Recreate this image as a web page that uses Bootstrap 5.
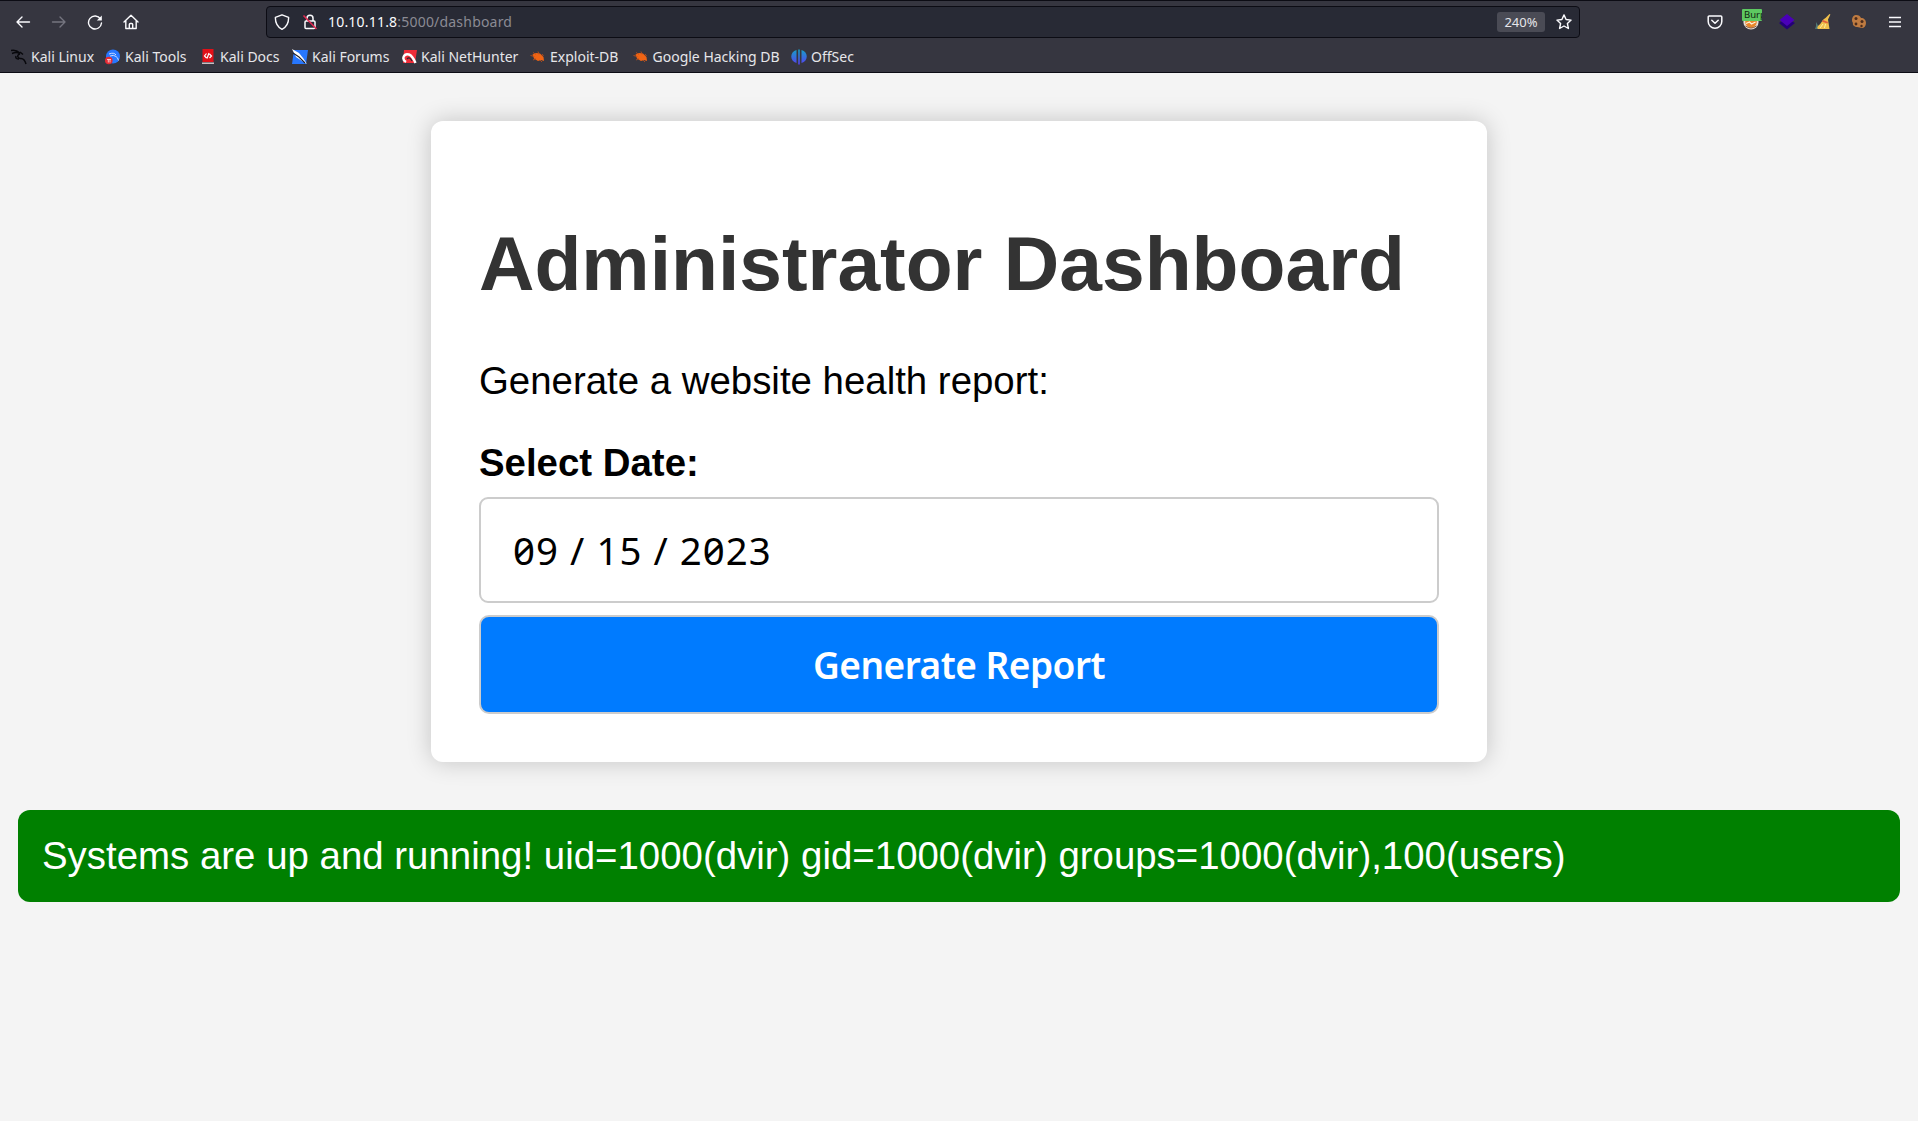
<!DOCTYPE html>
<html lang="en">
<head>
<meta charset="utf-8">
<title>Administrator Dashboard</title>
<link href="https://cdn.jsdelivr.net/npm/bootstrap@5.3.0/dist/css/bootstrap.min.css" rel="stylesheet">
<style>
body{background:#f4f4f4;color:#000;font-family:"Liberation Sans",Arial,sans-serif;font-size:38.4px;line-height:44px;min-height:1121px;overflow:hidden}
.chrome{height:73px;background:#363640;border-top:1px solid #0c0c14;border-bottom:1px solid #0c0c14;font-family:"Noto Sans",sans-serif;font-size:14px;line-height:20px;color:#e6e6ea}
.toolbar{height:40px;padding:1px 15px 0}
.toolbar svg,.marks svg{display:block;flex:none}
.nav-icons{width:251px;gap:20px}
.urlbar{width:1314px;height:32px;background:#282a35;border:1px solid #0c0c14;border-radius:4px;padding:0 7px}
.urlbar .addr{margin-left:10px;color:#8b8b94;white-space:nowrap;letter-spacing:.2px}
.urlbar b{font-weight:400;color:#fbfbfe}
.zoomlvl{background:#4a4b55;border-radius:3px;width:48px;height:20px;font-size:13px;line-height:21px;margin-right:11px;text-align:center}
.ext{gap:20px}
.burp{position:relative;width:16px;height:16px}
.burp span{position:absolute;left:-1px;top:-5px;width:20px;height:12px;background:#5dc861;color:#10240f;font-size:9.5px;line-height:12px;padding-left:2px;overflow:hidden;border-radius:1px}
.marks{height:31px;padding-left:11px}
.marks .mk{gap:4px;white-space:nowrap;flex:none}
.mk:nth-child(1){width:94px}
.mk:nth-child(2){width:95px}
.mk:nth-child(3){width:92px}
.mk:nth-child(4){width:109px}
.mk:nth-child(5){width:129px}
.mk:nth-child(6){width:102.500px}
.mk:nth-child(7){width:158.500px}
.panel{width:1056px;margin:48px auto 0;background:#fff;border-radius:12px;padding:48px;height:641px;box-shadow:0 0 24px rgba(0,0,0,.2)}
.panel h1{font-size:76.8px;line-height:88px;font-weight:700;color:#333;margin:50px 0 52px}
.panel p{margin:0 0 38px}
.panel label{font-weight:700;display:block;margin-bottom:12px}
.datebox{height:106px;border:2px solid #ccc;border-radius:9px;padding:0 32px;font-family:"Noto Sans",sans-serif;font-feature-settings:"zero";letter-spacing:1.05px}
.gobtn{margin-top:12px;height:99px;width:100%;background:#007bff;border:2px solid #ccc;border-radius:10px;color:#fff;font:600 37px/44px "Noto Sans",sans-serif;letter-spacing:-.5px;padding-top:2px}
.status{margin:48px 18px 0;height:92px;background:#008000;color:#fff;border-radius:12px;padding:0 24px;letter-spacing:.01px}
</style>
<script src="https://cdn.jsdelivr.net/npm/bootstrap@5.3.0/dist/js/bootstrap.bundle.min.js"></script>
</head>
<body>
<header class="chrome">
  <div class="toolbar d-flex align-items-center">
    <div class="nav-icons d-flex align-items-center">
      <svg width="16" height="16" fill="none" stroke="#fbfbfe" stroke-width="1.4" stroke-linecap="round" stroke-linejoin="round"><path d="M14.5 8H2M7 3L2 8l5 5"/></svg>
      <svg width="16" height="16" fill="none" stroke="#75757f" stroke-width="1.4" stroke-linecap="round" stroke-linejoin="round"><path d="M1.500 8H14M9 3l5 5-5 5"/></svg>
      <svg width="16" height="16" fill="none" stroke="#fbfbfe" stroke-width="1.4" stroke-linecap="round"><path d="M13.500 5A6.500 6.500 0 1 0 14.500 9"/><path d="M14.800 1.500v5h-5z" fill="#fbfbfe" stroke="none"/></svg>
      <svg width="16" height="16" fill="none" stroke="#fbfbfe" stroke-width="1.4" stroke-linejoin="round" stroke-linecap="round"><path d="M1 8L8 1.300 15 8M2.800 6.800v7.700h10.400V6.800M6.300 14.300V10.500a1 1 0 0 1 1-1h1.400a1 1 0 0 1 1 1v3.800"/></svg>
    </div>
    <div class="urlbar d-flex align-items-center">
      <svg width="16" height="16" fill="none" stroke="#fbfbfe" stroke-width="1.4" stroke-linejoin="round"><path d="M8 .8L14.600 3.300C14.800 9 12.500 13 8 15.300 3.500 13 1.200 9 1.400 3.300z"/></svg>
      <svg class="ms-2 ps-1" width="20" height="16" fill="none" stroke="#fbfbfe" stroke-width="1.500"><path d="M5 7V4.200a3 3 0 0 1 6 0V7"/><rect x="3" y="7" width="10" height="7.500" rx="1"/><path d="M1.500 1.500l13 13.500" stroke="#e22850" stroke-width="1.600"/></svg>
      <span class="addr"><b>10.10.11.8</b>:5000/dashboard</span>
      <span class="zoomlvl ms-auto">240%</span>
      <svg width="16" height="16" fill="none" stroke="#fbfbfe" stroke-width="1.4" stroke-linejoin="round"><path d="M8 .9l2.100 4.600 5 .6-3.700 3.400 1 5L8 12l-4.400 2.500 1-5L.9 6.100l5-.6z"/></svg>
    </div>
    <div class="ext d-flex align-items-center ms-auto">
      <svg width="16" height="16" fill="none" stroke="#fbfbfe" stroke-width="1.500" stroke-linecap="round" stroke-linejoin="round"><path d="M2.200 2h11.600a1 1 0 0 1 1 1v4.500a6.800 6.800 0 0 1-13.600 0V3a1 1 0 0 1 1-1zM4.800 6.300L8 9.300l3.200-3"/></svg>
      <div class="burp"><svg width="16" height="16"><circle cx="8" cy="8" r="7.600" fill="#e8dfd5"/><circle cx="8" cy="8" r="5.800" fill="#e8862b"/><path d="M3 9.500l3.500-1.500 2 2 4-2" stroke="#fff0d8" stroke-width="1.300" fill="none"/><path d="M2.500 12q5.500 4 11 0" stroke="#8a5a3a" fill="none"/></svg><span>Burp</span></div>
      <svg width="16" height="16"><path d="M8 4l8 5-8 6.500L0 9z" fill="#240078"/><path d="M8 0l7.500 6L8 12 .5 6z" fill="#4a00b8"/></svg>
      <svg width="16" height="16"><path d="M1 8l4 7H0l1-3z" fill="#4f7774"/><path d="M14.500 0l.9.600L13 5.500l1.500 9.500H3C1.500 14 2.500 12.500 4 11c3-2 3-5.500 6.500-7z" fill="#f0c04c"/><path d="M8 6l5 2-.5 1.500L7 7.800z" fill="#e3603c"/><path d="M5 14l3-4M9.500 14l1-4" stroke="#fff0a0"/></svg>
      <svg width="16" height="16"><path d="M5 1c3 0 4 1 5 3 3 0 5 2 5 5s-2 5-4 5-3-1-5-1-5-2-4-4C0 7 1 1 5 1z" fill="#bf7b41"/><g fill="#4c2c1b"><circle cx="5" cy="4.500" r="1.500"/><circle cx="5" cy="10" r="1.400"/><circle cx="11" cy="7.500" r="1.500"/><circle cx="10.500" cy="12" r="1.200"/></g></svg>
      <svg width="16" height="16" stroke="#fbfbfe" stroke-width="1.400"><path d="M2 3.500h12M2 8h12M2 12.500h12"/></svg>
    </div>
  </div>
  <nav class="marks d-flex align-items-center">
    <div class="mk d-flex align-items-center"><svg width="16" height="16" fill="none" stroke="#08080c" stroke-width="1.500"><path d="M0 1.500q5-1 9 2.500M1 4.500q5-2 8 .5M9 3l3 2.500M9 5c-4 1-2 5 1 4.500 3 0 4 2 5 5.500M5 7q-1 3 3 3"/></svg><span>Kali Linux</span></div>
    <div class="mk d-flex align-items-center"><svg width="16" height="16"><circle cx="8" cy="7.500" r="7" fill="#2777ff"/><path d="M4 5q5-2 7 1M5 7q4-1.500 6 .5 2 1 2.500 4" stroke="#dce8ff" stroke-width=".9" fill="none"/><circle cx="3.800" cy="11.500" r="3.800" fill="#e52b34"/><path d="M2 10.500h4M3.300 10.500v3M5 10.500v3" stroke="#fff" stroke-width=".7"/></svg><span>Kali Tools</span></div>
    <div class="mk d-flex align-items-center"><svg width="16" height="16"><path d="M2.500 0h11v13h-11z" fill="#e21018"/><path d="M2 13.500h12V15H2z" fill="#c9bfc2"/><path d="M6.500 4.500L4.500 7l2 2M9.500 5l2 2-2 2M9 4L7 9.500" stroke="#fff" fill="none" stroke-width="1.200"/></svg><span>Kali Docs</span></div>
    <div class="mk d-flex align-items-center"><svg width="16" height="16"><path d="M2 1h14l-2 14H0z" fill="#2777ff"/><path d="M0 0l7 4 4 5 4 6-5-3-6-4z" fill="#fff"/><path d="M1 4l6 4 6 6" stroke="#20202a" stroke-width="1.100" fill="none"/></svg><span>Kali Forums</span></div>
    <div class="mk d-flex align-items-center"><svg width="16" height="16"><path d="M3 1h13l-2 13H2z" fill="#ef2c38"/><path d="M5 13C0 10 3 4 8 5.500c3 1 5 5 6.500 8.500" fill="none" stroke="#fff" stroke-width="2.400"/><path d="M6 10q2.500-3 5 2" stroke="#292932" stroke-width="1.200" fill="none"/></svg><span>Kali NetHunter</span></div>
    <div class="mk d-flex align-items-center"><svg width="16" height="16"><path d="M2.500 5.500L6 4l4 .5L13.500 8l.5 4-3-1-3 1L4 9.500z" fill="#f06414"/><path d="M.5 6.500l4 1M3 3.500l3 2M8 2.500l1 3M12 5l1.500 2M3 11l3-1.500M10 11l2 2" stroke="#c85016" stroke-width=".8"/></svg><span>Exploit-DB</span></div>
    <div class="mk d-flex align-items-center"><svg width="16" height="16"><path d="M2.500 5.500L6 4l4 .5L13.500 8l.5 4-3-1-3 1L4 9.500z" fill="#f06414"/><path d="M.5 6.500l4 1M3 3.500l3 2M8 2.500l1 3M12 5l1.500 2M3 11l3-1.500M10 11l2 2" stroke="#c85016" stroke-width=".8"/></svg><span>Google Hacking DB</span></div>
    <div class="mk d-flex align-items-center"><svg width="16" height="16"><defs><linearGradient id="og" x2="0" y2="1"><stop stop-color="#16a0c8"/><stop offset="1" stop-color="#5540f0"/></linearGradient></defs><path d="M5.500 1v13C-1.500 12-1.500 3 5.500 1zM7.200.5h1.600v15H7.200zM10.500 1c7 2 7 11 0 13z" fill="url(#og)"/></svg><span>OffSec</span></div>
  </nav>
</header>
<main>
  <section class="panel">
    <h1>Administrator Dashboard</h1>
    <p>Generate a website health report:</p>
    <label>Select Date:</label>
    <div class="datebox d-flex align-items-center"><span>09 / 15 / 2023</span></div>
    <button class="gobtn" type="button"><span>Generate Report</span></button>
  </section>
  <div class="status d-flex align-items-center"><span>Systems are up and running! uid=1000(dvir) gid=1000(dvir) groups=1000(dvir),100(users)</span></div>
</main>
</body>
</html>
